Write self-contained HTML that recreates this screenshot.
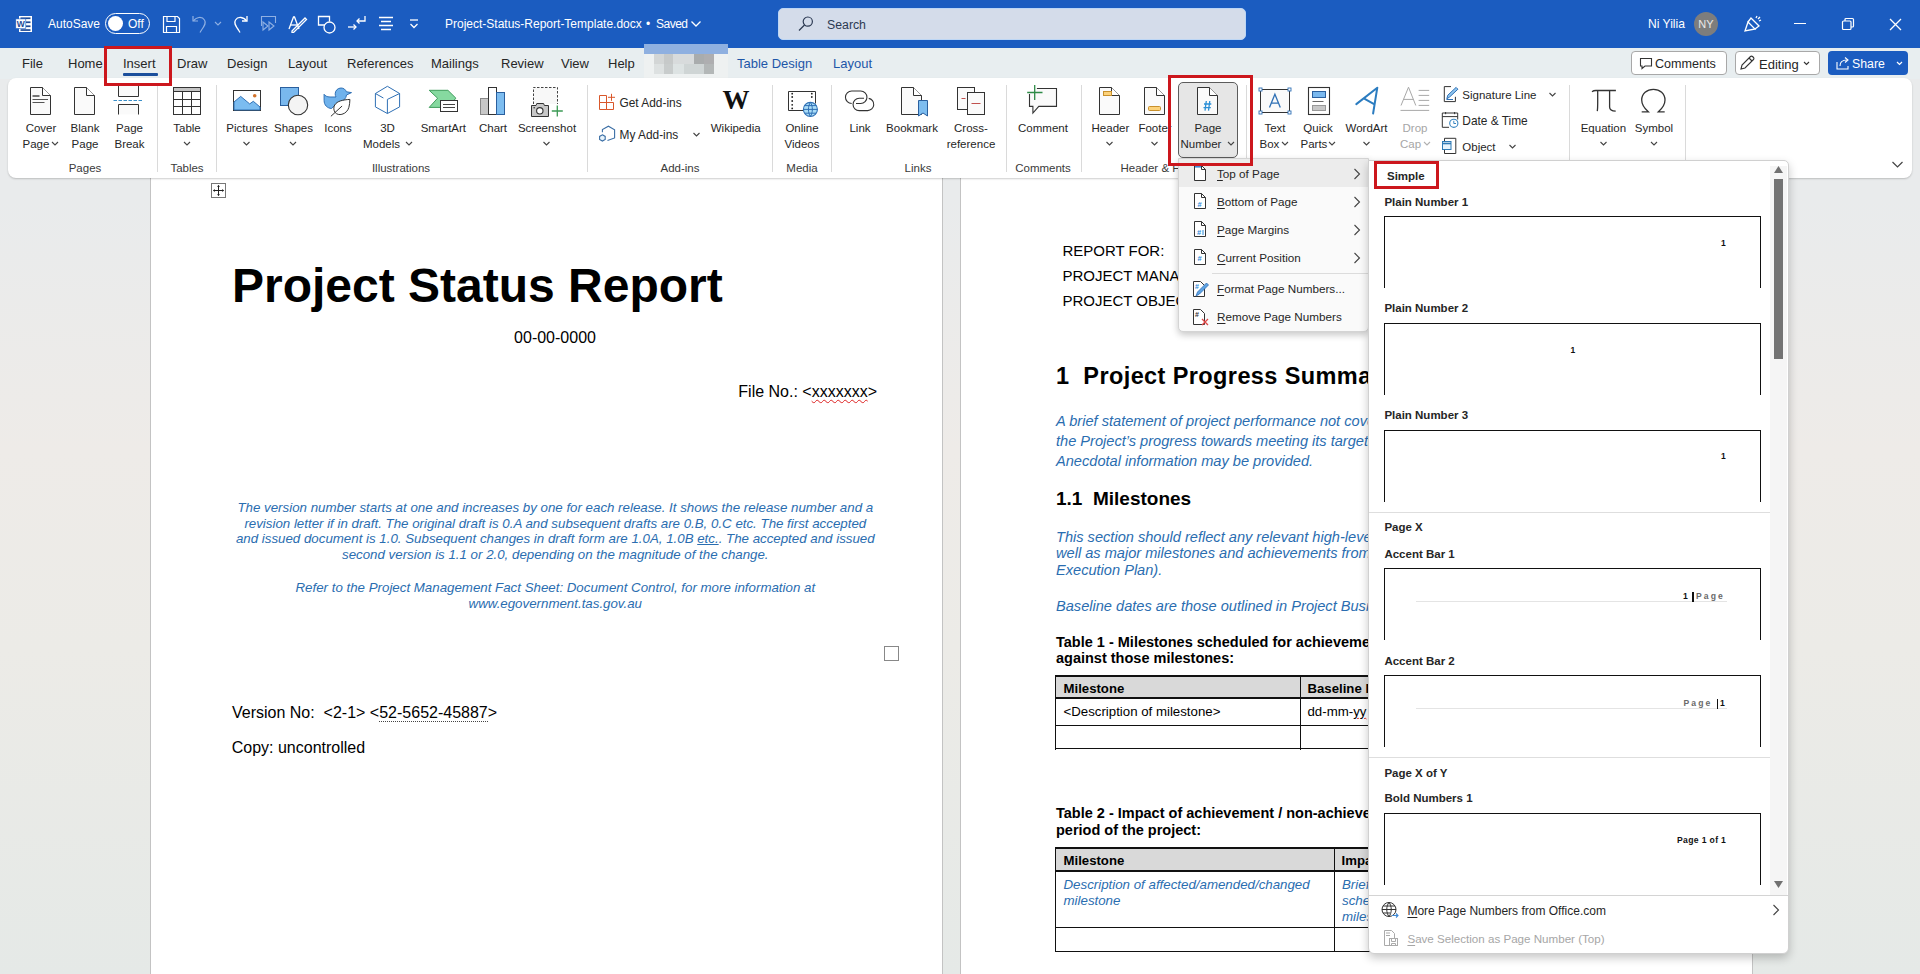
<!DOCTYPE html>
<html><head><meta charset="utf-8">
<style>
*{box-sizing:border-box;margin:0;padding:0}
html,body{width:1920px;height:974px;overflow:hidden;background:linear-gradient(180deg,#e9ebec 0,#e9ebec 200px,#eeebe8 450px,#ecebe7 650px,#e5e9e7 974px);font-family:"Liberation Sans",sans-serif;position:relative}
.a{position:absolute;white-space:nowrap}
#title{position:absolute;left:0;top:0;width:1920px;height:48px;background:#1b5cc0;color:#fff}
#tabs{position:absolute;left:0;top:48px;width:1920px;height:31px;background:#e8eef0}
.tab{position:absolute;top:8px;font-size:13px;line-height:15px;color:#262626;white-space:nowrap}
.rib{position:absolute;left:8px;top:78px;width:1904px;height:100px;background:#fff;border-radius:8px;box-shadow:0 1px 2px rgba(0,0,0,.2)}
.t{position:absolute;font-size:11.5px;line-height:16px;color:#262626;text-align:center;white-space:nowrap}
.g{position:absolute;top:160px;font-size:11.5px;line-height:16px;color:#3a3a3a;white-space:nowrap}
.sep{position:absolute;top:85px;width:1px;height:87px;background:#dadada}
.chev{position:absolute;width:7px;height:5px}
.page{position:absolute;background:#fff;border:1px solid #c3c3c3}
.d{position:absolute;white-space:nowrap;color:#000;font-family:"Liberation Sans",sans-serif}
.bl{color:#2e74b5;font-style:italic}
.mi{position:absolute;left:1217px;font-size:11.7px;line-height:15px;color:#262626;white-space:nowrap}
.gh{position:absolute;left:1384px;font-size:11.5px;line-height:15px;font-weight:bold;color:#262626;white-space:nowrap}
.pv{position:absolute;left:1384px;width:377px;height:72px;border:1.5px solid #111;border-bottom:none;background:#fff}
</style></head>
<body>
<div class="page" style="left:150px;top:150px;width:793px;height:900px"></div>
<div class="page" style="left:960px;top:150px;width:793px;height:900px"></div>
<svg class="a" style="left:211px;top:183px" width="15" height="15" viewBox="0 0 15 15"><rect x="0.5" y="0.5" width="14" height="14" fill="#fff" stroke="#777" stroke-width="1"/><path d="M7.5 2.5v10M2.5 7.5h10" stroke="#222" stroke-width="1"/><path d="M7.5 2l-1.5 1.8h3zM7.5 13l-1.5-1.8h3zM2 7.5l1.8-1.5v3zM13 7.5l-1.8-1.5v3z" fill="#222"/></svg>
<div class="d" style="left:232.0px;top:262.2px;font-size:48px;line-height:48px;font-weight:bold">Project Status Report</div>
<div class="d" style="left:455.0px;top:330.0px;font-size:16px;line-height:16px;width:200px;text-align:center;">00-00-0000</div>
<div class="d" style="left:577.0px;top:383.5px;font-size:16px;line-height:16px;width:300px;text-align:right;">File No.: &lt;<span style="text-decoration:underline wavy #d22;text-decoration-thickness:1px;text-underline-offset:2px">xxxxxxx</span>&gt;</div>
<div class="d" style="left:155.3px;top:501.4px;font-size:13.3px;line-height:13.3px;width:800px;text-align:center;color:#2a6db0;font-style:italic">The version number starts at one and increases by one for each release. It shows the release number and a</div>
<div class="d" style="left:155.3px;top:516.9px;font-size:13.3px;line-height:13.3px;width:800px;text-align:center;color:#2a6db0;font-style:italic">revision letter if in draft. The original draft is 0.A and subsequent drafts are 0.B, 0.C etc. The first accepted</div>
<div class="d" style="left:155.3px;top:532.4px;font-size:13.3px;line-height:13.3px;width:800px;text-align:center;color:#2a6db0;font-style:italic">and issued document is 1.0. Subsequent changes in draft form are 1.0A, 1.0B <u>etc.</u>. The accepted and issued</div>
<div class="d" style="left:155.3px;top:547.9px;font-size:13.3px;line-height:13.3px;width:800px;text-align:center;color:#2a6db0;font-style:italic">second version is 1.1 or 2.0, depending on the magnitude of the change.</div>
<div class="d" style="left:155.3px;top:581.1px;font-size:13.3px;line-height:13.3px;width:800px;text-align:center;color:#2a6db0;font-style:italic">Refer to the Project Management Fact Sheet: Document Control, for more information at</div>
<div class="d" style="left:155.3px;top:596.9px;font-size:13.3px;line-height:13.3px;width:800px;text-align:center;color:#2a6db0;font-style:italic">www.egovernment.tas.gov.au</div>
<div class="a" style="left:884px;top:646px;width:15px;height:15px;border:1px solid #888;background:#fff"></div>
<div class="d" style="left:232.0px;top:705.4px;font-size:16px;line-height:16px;">Version No:&nbsp; &lt;2-1&gt; &lt;<span style="border-bottom:1px dotted #444">52-5652-45887</span>&gt;</div>
<div class="d" style="left:231.7px;top:739.8px;font-size:16px;line-height:16px;">Copy: uncontrolled</div>
<div class="d" style="left:1062.4px;top:242.8px;font-size:15px;line-height:15px;">REPORT FOR:</div>
<div class="d" style="left:1062.4px;top:267.8px;font-size:15px;line-height:15px;">PROJECT MANAGER:</div>
<div class="d" style="left:1062.4px;top:292.8px;font-size:15px;line-height:15px;">PROJECT OBJECTIVE:</div>
<div class="d" style="left:1056.0px;top:365.1px;font-size:23.5px;line-height:23.5px;font-weight:bold;letter-spacing:0.4px">1&nbsp;&nbsp;Project Progress Summary</div>
<div class="d" style="left:1056.0px;top:413.9px;font-size:14.6px;line-height:14.6px;color:#2a6db0;font-style:italic">A brief statement of project performance not covered elsewhere in this report, summarising</div>
<div class="d" style="left:1056.0px;top:433.9px;font-size:14.6px;line-height:14.6px;color:#2a6db0;font-style:italic">the Project’s progress towards meeting its targets and deliverables for the reporting period.</div>
<div class="d" style="left:1056.0px;top:453.9px;font-size:14.6px;line-height:14.6px;color:#2a6db0;font-style:italic">Anecdotal information may be provided.</div>
<div class="d" style="left:1056.0px;top:488.5px;font-size:19px;line-height:19px;font-weight:bold">1.1&nbsp;&nbsp;Milestones</div>
<div class="d" style="left:1056.0px;top:529.5px;font-size:14.6px;line-height:14.6px;color:#2a6db0;font-style:italic">This section should reflect any relevant high-level milestones for the reporting period, as</div>
<div class="d" style="left:1056.0px;top:546.0px;font-size:14.6px;line-height:14.6px;color:#2a6db0;font-style:italic">well as major milestones and achievements from the Project Business Plan (or Project</div>
<div class="d" style="left:1056.0px;top:562.5px;font-size:14.6px;line-height:14.6px;color:#2a6db0;font-style:italic">Execution Plan).</div>
<div class="d" style="left:1056.0px;top:598.9px;font-size:14.6px;line-height:14.6px;color:#2a6db0;font-style:italic">Baseline dates are those outlined in Project Business Plan.</div>
<div class="d" style="left:1056.0px;top:634.7px;font-size:14.5px;line-height:14.5px;font-weight:bold">Table 1 - Milestones scheduled for achievement during the reporting period and progress</div>
<div class="d" style="left:1056.0px;top:650.7px;font-size:14.5px;line-height:14.5px;font-weight:bold">against those milestones:</div>
<div class="a" style="left:1055px;top:675px;width:700px;height:24px;background:#d9d9d9;border-top:2px solid #111;border-bottom:2px solid #111"></div>
<div class="a" style="left:1055px;top:699px;width:700px;height:50px;border-bottom:1px solid #111"></div>
<div class="a" style="left:1055px;top:725px;width:700px;height:1px;background:#111"></div>
<div class="a" style="left:1055px;top:675px;width:1px;height:75px;background:#111"></div>
<div class="a" style="left:1299.5px;top:675px;width:1px;height:75px;background:#111"></div>
<div class="d" style="left:1063.5px;top:681.6px;font-size:13.2px;line-height:13.2px;font-weight:bold">Milestone</div>
<div class="d" style="left:1307.5px;top:681.6px;font-size:13.2px;line-height:13.2px;font-weight:bold">Baseline Date</div>
<div class="d" style="left:1063.5px;top:705.3px;font-size:13.25px;line-height:13.25px;">&lt;Description of milestone&gt;</div>
<div class="d" style="left:1307.5px;top:705.3px;font-size:13.25px;line-height:13.25px;">dd-mm-<span style="text-decoration:underline wavy #d22;text-decoration-thickness:1px">yy</span></div>
<div class="d" style="left:1056.0px;top:805.7px;font-size:14.5px;line-height:14.5px;font-weight:bold">Table 2 - Impact of achievement / non-achievement of milestones on the remaining</div>
<div class="d" style="left:1056.0px;top:822.7px;font-size:14.5px;line-height:14.5px;font-weight:bold">period of the project:</div>
<div class="a" style="left:1055px;top:847px;width:700px;height:25px;background:#d9d9d9;border-top:2px solid #111;border-bottom:2px solid #111"></div>
<div class="a" style="left:1055px;top:927px;width:700px;height:1px;background:#111"></div>
<div class="a" style="left:1055px;top:951px;width:700px;height:1px;background:#111"></div>
<div class="a" style="left:1055px;top:847px;width:1px;height:105px;background:#111"></div>
<div class="a" style="left:1333.5px;top:847px;width:1px;height:105px;background:#111"></div>
<div class="d" style="left:1063.5px;top:854.2px;font-size:13.2px;line-height:13.2px;font-weight:bold">Milestone</div>
<div class="d" style="left:1341.5px;top:854.2px;font-size:13.2px;line-height:13.2px;font-weight:bold">Impact</div>
<div class="d" style="left:1063.5px;top:877.7px;font-size:13.3px;line-height:13.3px;color:#2a6db0;font-style:italic">Description of affected/amended/changed</div>
<div class="d" style="left:1063.5px;top:893.5px;font-size:13.3px;line-height:13.3px;color:#2a6db0;font-style:italic">milestone</div>
<div class="d" style="left:1342.0px;top:877.7px;font-size:13.3px;line-height:13.3px;color:#2a6db0;font-style:italic">Brief description of</div>
<div class="d" style="left:1342.0px;top:893.7px;font-size:13.3px;line-height:13.3px;color:#2a6db0;font-style:italic">schedule impact on</div>
<div class="d" style="left:1342.0px;top:909.7px;font-size:13.3px;line-height:13.3px;color:#2a6db0;font-style:italic">milestones</div>
<div id="title">
<svg class="a" style="left:15px;top:15px" width="18" height="18" viewBox="0 0 18 18"><rect x="4" y="1" width="13" height="16" fill="#fff"/><rect x="5.5" y="2.4" width="10" height="1.7" fill="#1d4a96"/><rect x="11" y="6.4" width="4.5" height="1.7" fill="#1d4a96"/><rect x="11" y="10.4" width="4.5" height="1.7" fill="#1d4a96"/><rect x="5.5" y="14.2" width="10" height="1.7" fill="#1d4a96"/><rect x="0.8" y="3.9" width="10" height="9.6" fill="#fff" stroke="#1b5cc0" stroke-width="0.6"/><text x="5.8" y="12.2" font-size="8.5" font-weight="bold" text-anchor="middle" fill="#1d4a96" font-family="Liberation Sans">W</text></svg>
<div class="a" style="left:48px;top:17px;font-size:12px;line-height:15px;color:#fff">AutoSave</div>
<div class="a" style="left:105px;top:13px;width:45px;height:21px;border:1.5px solid #fff;border-radius:11px"></div>
<div class="a" style="left:108px;top:16px;width:15px;height:15px;border-radius:50%;background:#fff"></div>
<div class="a" style="left:128px;top:17px;font-size:12px;line-height:15px;color:#fff">Off</div>
<svg class="a" style="left:162px;top:15px" width="19" height="19" viewBox="0 0 19 19" fill="none" stroke="#fff" stroke-width="1.2"><path d="M1.5 1.5h14l2 2v14h-16z"/><path d="M5 1.5v5h8v-5"/><path d="M4.5 17.5v-6h10v6"/></svg>
<svg class="a" style="left:190px;top:14px" width="20" height="20" viewBox="0 0 20 20" fill="none" stroke="#8fb0e3" stroke-width="1.2"><path d="M3 2v5h5"/><path d="M3.5 7C6 3 12 2 14.5 6c2 3 0 6-3 10l-1.5 2.5"/></svg>
<svg class="a" style="left:213px;top:20px" width="10" height="8" viewBox="0 0 10 8" fill="none" stroke="#8fb0e3" stroke-width="1.1"><path d="M2 2l3 3 3-3"/></svg>
<svg class="a" style="left:230px;top:14px" width="20" height="20" viewBox="0 0 20 20" fill="none" stroke="#fff" stroke-width="1.3"><path d="M17 2v5h-5"/><path d="M16.5 7C14 3 8 2 5.5 6c-2 3 0 6 3 10l1.5 2.5"/></svg>
<svg class="a" style="left:259px;top:15px" width="20" height="18" viewBox="0 0 20 18" fill="none" stroke="#8fb0e3" stroke-width="1.1"><path d="M2.5 11V1.5h14V8"/><path d="M4 7l5 4-5 4z"/><path d="M10 7l5 4-5 4z"/></svg>
<svg class="a" style="left:288px;top:15px" width="20" height="18" viewBox="0 0 20 18" fill="none" stroke="#fff" stroke-width="1.3"><path d="M1 14L5.5 2h1L11 14"/><path d="M3 10h6"/><path d="M4 16l13-13 1.5 1.5-13 13H4z"/></svg>
<svg class="a" style="left:317px;top:15px" width="20" height="19" viewBox="0 0 20 19" fill="none" stroke="#fff" stroke-width="1.3"><path d="M8 10H1.5V1.5h11v5"/><circle cx="12.5" cy="12.5" r="5.5"/></svg>
<svg class="a" style="left:347px;top:15px" width="20" height="18" viewBox="0 0 20 18" fill="none" stroke="#fff" stroke-width="1.3"><path d="M18 1v5h-8"/><path d="M12.5 3.5L10 6l2.5 2.5"/><path d="M1 12h8"/><path d="M6.5 9.5L9 12l-2.5 2.5"/></svg>
<svg class="a" style="left:377px;top:16px" width="18" height="16" viewBox="0 0 18 16" fill="none" stroke="#fff" stroke-width="1.3"><path d="M2 1.5h14M4 5.5h10M2 9.5h14M4 13.5h10"/></svg>
<svg class="a" style="left:407px;top:18px" width="14" height="12" viewBox="0 0 14 12" fill="none" stroke="#fff" stroke-width="1.3"><path d="M3 2h8"/><path d="M3.5 6l3.5 3.5L10.5 6"/></svg>
<div class="a" style="left:445px;top:17px;font-size:12px;line-height:15px;color:#fff">Project-Status-Report-Template.docx</div><div class="a" style="left:646px;top:17px;font-size:12px;line-height:15px;color:#fff">&#8226;</div><div class="a" style="left:656px;top:17px;font-size:12px;line-height:15px;color:#fff;letter-spacing:-0.5px">Saved</div>
<svg class="a" style="left:690px;top:19px" width="12" height="10" viewBox="0 0 12 10" fill="none" stroke="#fff" stroke-width="1.3"><path d="M1.5 2.5l4.5 4.5 4.5-4.5"/></svg>
<div class="a" style="left:778px;top:8px;width:468px;height:32px;background:#d4dcea;border:1px solid #bcd6f5;border-radius:5px"></div>
<svg class="a" style="left:797px;top:15px" width="18" height="18" viewBox="0 0 18 18" fill="none" stroke="#2c3a52" stroke-width="1.2"><circle cx="10.8" cy="6.6" r="4.6"/><path d="M7.5 10l-5.5 5.5"/></svg>
<div class="a" style="left:827px;top:18px;font-size:12.3px;line-height:15px;color:#2c3a52">Search</div>
<div class="a" style="left:1648px;top:17px;font-size:12.1px;line-height:15px;color:#fff">Ni Yilia</div>
<div class="a" style="left:1694px;top:12px;width:24px;height:24px;border-radius:50%;background:#7d7d7d;color:#e8e8e8;font-size:11px;text-align:center;line-height:24px">NY</div>
<svg class="a" style="left:1743px;top:14px" width="20" height="20" viewBox="0 0 20 20" fill="none" stroke="#fff" stroke-width="1.3"><path d="M2 17l3-9 7 7z"/><path d="M5 8l3-4 8 8-4 3"/><path d="M13 4l1-2M16 7l2-1M15 5l2-2"/></svg>
<div class="a" style="left:1794px;top:23px;width:12px;height:1.3px;background:#fff"></div>
<svg class="a" style="left:1841px;top:17px" width="14" height="14" viewBox="0 0 14 14" fill="none" stroke="#fff" stroke-width="1.2"><rect x="1.5" y="4" width="8.5" height="8.5" rx="1"/><path d="M4 4V2.5a1 1 0 0 1 1-1h6.5a1 1 0 0 1 1 1V9a1 1 0 0 1-1 1H10"/></svg>
<svg class="a" style="left:1889px;top:18px" width="13" height="13" viewBox="0 0 13 13" fill="none" stroke="#fff" stroke-width="1.3"><path d="M1 1l11 11M12 1L1 12"/></svg>
</div>
<div id="tabs">
<div class="tab" style="left:22px">File</div>
<div class="tab" style="left:68px">Home</div>
<div class="tab" style="left:123px">Insert</div>
<div class="a" style="left:123px;top:25px;width:35px;height:2.5px;background:#1b4f9c;border-radius:1px"></div>
<div class="tab" style="left:177px">Draw</div>
<div class="tab" style="left:227px">Design</div>
<div class="tab" style="left:288px">Layout</div>
<div class="tab" style="left:347px">References</div>
<div class="tab" style="left:431px">Mailings</div>
<div class="tab" style="left:501px">Review</div>
<div class="tab" style="left:561px">View</div>
<div class="tab" style="left:608px">Help</div>
<div class="tab" style="left:737px;color:#1d56a8">Table Design</div>
<div class="tab" style="left:833px;color:#1d56a8">Layout</div>
<div class="a" style="left:1631px;top:3px;width:96px;height:24px;border:1px solid #a8a8a8;border-radius:4px;background:#fff"></div>
<svg class="a" style="left:1639px;top:9px" width="14" height="13" viewBox="0 0 14 13" fill="none" stroke="#333" stroke-width="1.1"><path d="M1.5 1.5h11v7.5H6L3 11.5V9H1.5z"/></svg>
<div class="tab" style="left:1655px;top:9px;font-size:12.6px">Comments</div>
<div class="a" style="left:1735px;top:3px;width:85px;height:24px;border:1px solid #a8a8a8;border-radius:4px;background:#fff"></div>
<svg class="a" style="left:1739px;top:7px" width="16" height="16" viewBox="0 0 16 16" fill="none" stroke="#333" stroke-width="1.1"><path d="M2 14l1-4 8.5-8.5a1.4 1.4 0 0 1 2 0l1 1a1.4 1.4 0 0 1 0 2L6 13z"/><path d="M10 3l3 3"/></svg>
<div class="tab" style="left:1759px;top:9px">Editing</div>
<svg class="chev" style="left:1803px;top:13px" viewBox="0 0 7 5" fill="none" stroke="#333" stroke-width="1.1"><path d="M1 1l2.5 2.5L6 1"/></svg>
<div class="a" style="left:1828px;top:3px;width:80px;height:24px;border-radius:4px;background:#1b5cc0"></div>
<svg class="a" style="left:1835px;top:7px" width="16" height="16" viewBox="0 0 16 16" fill="none" stroke="#fff" stroke-width="1.1"><path d="M2 7v7h11v-3"/><path d="M5 11c0-4 3-6 7-6"/><path d="M10 2.5l3 2.5-3 2.5"/></svg>
<div class="tab" style="left:1852px;top:9px;color:#fff;font-size:12.3px">Share</div>
<svg class="chev" style="left:1896px;top:13px" viewBox="0 0 7 5" fill="none" stroke="#fff" stroke-width="1.2"><path d="M1 1l2.5 2.5L6 1"/></svg>
</div>
<div class="a" style="left:644px;top:44px;width:84px;height:10px;background:#8fb0e0"></div>
<div class="a" style="left:644px;top:54px;width:84px;height:30px;background:#eef1f1"></div>
<div class="a" style="left:654px;top:54px;width:10px;height:10px;background:#d3d6d6"></div>
<div class="a" style="left:664px;top:54px;width:9px;height:10px;background:#c6c9c9"></div>
<div class="a" style="left:673px;top:54px;width:21px;height:10px;background:#d8dbdc"></div>
<div class="a" style="left:694px;top:54px;width:10px;height:10px;background:#a9acad"></div>
<div class="a" style="left:704px;top:54px;width:10px;height:10px;background:#aeaeb0"></div>
<div class="a" style="left:654px;top:64px;width:10px;height:10px;background:#dde1e1"></div>
<div class="a" style="left:664px;top:64px;width:9px;height:10px;background:#c8cccc"></div>
<div class="a" style="left:673px;top:64px;width:11px;height:10px;background:#dde3e3"></div>
<div class="a" style="left:684px;top:64px;width:20px;height:10px;background:#cfd5d5"></div>
<div class="a" style="left:704px;top:64px;width:10px;height:10px;background:#b3b7b7"></div>

<div class="rib"></div>
<svg class="a" style="left:0;top:0" width="1920" height="180" viewBox="0 0 1920 180"><path d="M30.5 87.5H42.5L50.5 95.5V114.5H30.5Z" fill="#fafafa" stroke="#333" stroke-width="1"/><path d="M42.5 87.5V95.5H50.5" fill="#fff" stroke="#333" stroke-width="1"/><path d="M32.5 96h7" stroke="#666" stroke-width="1.8"/><path d="M32.5 99.5h15.5M32.5 102.5h12" stroke="#555" stroke-width="1"/><path d="M74.5 87.5H86.5L94.5 95.5V114.5H74.5Z" fill="#fafafa" stroke="#333" stroke-width="1"/><path d="M86.5 87.5V95.5H94.5" fill="#fff" stroke="#333" stroke-width="1"/><path d="M118.5 86v10.5h20V86" fill="#fafafa" stroke="#333" stroke-width="1"/><path d="M113.5 100.5h30" stroke="#3a8fc8" stroke-width="1" stroke-dasharray="3.5 1.5"/><path d="M118.5 114.5V104.5h20V114.5" fill="#fafafa" stroke="#333" stroke-width="1"/><rect x="173.5" y="87.5" width="27" height="27" fill="#fff" stroke="#333" stroke-width="1"/><rect x="174" y="88" width="26" height="3" fill="#c4c4c4"/><path d="M173.5 91.5h27M173.5 99.5h27M173.5 106.5h27M182.5 91.5v23M191.5 91.5v23" stroke="#333" stroke-width="1"/><rect x="233.5" y="90.5" width="27" height="20" fill="#fff" stroke="#333" stroke-width="1"/><path d="M234 102l6.7-5.6 9 7.5 3.6-2.6 6.7 5.7V110H234z" fill="#7bbcf0" stroke="#2f70b5" stroke-width="1"/><circle cx="254.7" cy="95.7" r="1.8" fill="#d2722a"/><rect x="280.5" y="87.5" width="18" height="18" fill="#79b8ee" stroke="#2a5f9e" stroke-width="1"/><circle cx="298" cy="105" r="9.7" fill="#f4f4f4" stroke="#333" stroke-width="1.1"/><path d="M324.1 94.3C325 95.8 327 97 330 97h6c-.6-1-.8-2-.8-3.2 0-3.2 2.6-5.8 5.8-5.8 2.6 0 4.6 1.6 5.4 3.8l5.1.8-5 2.4c-.4 3.3-2.8 6-6 6.8L336 104l-4.4 4.5c-4.3-.3-7.5-3.2-7.5-8.2z" fill="#6fb2ec" stroke="#2f70b5" stroke-width="1"/><path d="M349.9 99.4c-7 .4-12.7 1.6-15.2 5.6-1.3 2.3-1.2 5.5.6 7.7 1.6 1.8 4.2 2.2 6.6 1.6 3.5-.9 6-3.5 7-7 .7-2.6.9-5.2 1-7.9z" fill="#fff" stroke="#333" stroke-width="1"/><path d="M330.9 116.3l11.2-10.3" stroke="#333" stroke-width="1"/><path d="M387.4 86.3l12.2 7.2v13.4l-12.2 6.6-12-6.6V93.5z" fill="#fff" stroke="#2f70b5" stroke-width="1"/><path d="M399.6 93.5l-12.2 5.9v14.1M375.4 93.5l8 4.5" fill="none" stroke="#2f70b5" stroke-width="1"/><path d="M429.2 90.3h18.7l8 7.9-8 9.2h-18.7l8.4-9.2z" fill="#86d9a0" stroke="#3f9d5c" stroke-width="1"/><rect x="440.5" y="100.5" width="17" height="11" fill="#fff" stroke="#333" stroke-width="1"/><path d="M443 104.5h12M443 107.5h12" stroke="#444" stroke-width="1"/><rect x="480.5" y="98.5" width="8" height="16" fill="#c8c8c8" stroke="#888" stroke-width="1"/><rect x="488.5" y="87.5" width="8" height="27" fill="#fff" stroke="#333" stroke-width="1"/><rect x="496.5" y="92.5" width="8" height="22" fill="#7dbdf0" stroke="#2a5f9e" stroke-width="1"/><path d="M533.5 104V87.5h24V104" fill="#f8f8f8" stroke="#444" stroke-width="1" stroke-dasharray="2.5 1.5"/><path d="M531.5 105.5h4.5l.8-2h6.8l.8 2h4.1v11h-17z" fill="#c8c8c8" stroke="#333" stroke-width="1"/><circle cx="539.8" cy="110.8" r="3.2" fill="#fff" stroke="#333" stroke-width="1.1"/><circle cx="534.2" cy="107.8" r=".8" fill="#333"/><path d="M557.3 105.4v11M551.8 111h11" stroke="#3d9a55" stroke-width="1.3"/><path d="M599.5 95.5h7v7h-7zM599.5 102.5h7v7h-7zM606.5 102.5h7v7h-7z" fill="none" stroke="#d9572a" stroke-width="1"/><path d="M611.5 93.8v7M608 97.3h7" stroke="#d9572a" stroke-width="1"/><path d="M602.4 132.2v-2.7l6-3.3 6.2 3.5v8.2l-7.1 2.5" fill="none" stroke="#3a6ea5" stroke-width="1.1"/><path d="M602.4 134.8l2.8 1.6v3.1l-2.8 1.6-2.8-1.6v-3.1z" fill="#e8f4fc" stroke="#3a6ea5" stroke-width="1.1"/><path d="M803 110.5h-14.5v-19h27v12" fill="#fff" stroke="#333" stroke-width="1"/><circle cx="792.2" cy="93.7" r=".9" fill="#222"/><circle cx="792.2" cy="97" r=".9" fill="#222"/><circle cx="792.2" cy="101" r=".9" fill="#222"/><circle cx="792.2" cy="104.8" r=".9" fill="#222"/><circle cx="792.2" cy="108.4" r=".9" fill="#222"/><circle cx="811.8" cy="93.7" r=".9" fill="#222"/><circle cx="811.8" cy="97" r=".9" fill="#222"/><circle cx="810.4" cy="109.4" r="7" fill="#a9dcf7" stroke="#2f70b5" stroke-width="1.1"/><path d="M803.4 109.4h14M810.4 102.4c-2.6 3.5-2.6 10.5 0 14M810.4 102.4c2.6 3.5 2.6 10.5 0 14M804.5 105.6h11.8M804.5 113.2h11.8" fill="none" stroke="#2f70b5" stroke-width="1"/><path d="M851.7 103.5a6.2 6.2 0 0 1 0-12.5h9a6.25 6.25 0 0 1 0 12.5H856" fill="none" stroke="#333" stroke-width="1.1"/><path d="M864 98.3h-4.8a6.15 6.15 0 0 0 0 12.3h8.5a6.15 6.15 0 0 0 1-12.2" fill="none" stroke="#333" stroke-width="1.1"/><path d="M901.5 87.5H913.5L921.5 95.5V114.5H901.5Z" fill="#fafafa" stroke="#333" stroke-width="1"/><path d="M913.5 87.5V95.5H921.5" fill="#fff" stroke="#333" stroke-width="1"/><path d="M918.5 100.5h9v15.5l-4.5-3-4.5 3z" fill="#7dbdf0" stroke="#2a5f9e" stroke-width="1"/><rect x="957.5" y="87.5" width="17" height="22" fill="#fafafa" stroke="#333" stroke-width="1"/><rect x="967.5" y="92.5" width="17" height="22" fill="#fafafa" stroke="#333" stroke-width="1"/><path d="M961.5 98.5h4M971.5 103.5h9" stroke="#c0504d" stroke-width="1.1"/><path d="M1036.9 88.5h19.6v17.9h-17.7l-5.9 6.6v-6.6h-3.4V94" fill="#fafafa" stroke="#333" stroke-width="1.1"/><path d="M1034.7 84.9v15M1027.2 92.5h15.3" stroke="#2e8b47" stroke-width="1.3"/><path d="M1099.5 87.5H1111.5L1119.5 95.5V114.5H1099.5Z" fill="#fafafa" stroke="#333" stroke-width="1"/><path d="M1111.5 87.5V95.5H1119.5" fill="#fff" stroke="#333" stroke-width="1"/><rect x="1103.5" y="91.5" width="8" height="4" fill="#fcd27a" stroke="#c8902c" stroke-width="1"/><path d="M1144.5 87.5H1156.5L1164.5 95.5V114.5H1144.5Z" fill="#fafafa" stroke="#333" stroke-width="1"/><path d="M1156.5 87.5V95.5H1164.5" fill="#fff" stroke="#333" stroke-width="1"/><rect x="1148.5" y="106.5" width="12" height="4" rx="1" fill="#fcd27a" stroke="#c8902c" stroke-width="1"/><rect x="1260.5" y="89.5" width="29" height="23" fill="#fafafa" stroke="#333" stroke-width="1"/><rect x="1259.0" y="88.0" width="3" height="3" fill="#fff" stroke="#2f70b5" stroke-width="0.9"/><rect x="1288.0" y="88.0" width="3" height="3" fill="#fff" stroke="#2f70b5" stroke-width="0.9"/><rect x="1259.0" y="111.0" width="3" height="3" fill="#fff" stroke="#2f70b5" stroke-width="0.9"/><rect x="1288.0" y="111.0" width="3" height="3" fill="#fff" stroke="#2f70b5" stroke-width="0.9"/><path d="M1269.5 107.4l5.4-13.2 5.4 13.2M1271.3 103.2h7.2" fill="none" stroke="#2f70b5" stroke-width="1.3"/><rect x="1308.5" y="87.5" width="21" height="27" fill="#fff" stroke="#333" stroke-width="1.1"/><rect x="1312.5" y="91.5" width="13" height="6" fill="#7ab8ee" stroke="#2a5f9e" stroke-width="1"/><path d="M1312.5 101.5h11" stroke="#666" stroke-width="1"/><rect x="1312.5" y="105.5" width="13" height="5" fill="#c8c8c8" stroke="#999" stroke-width="1"/><path d="M1356.3 104.1L1377.3 87.7 1373.1 113.5M1364.7 98.9l9.8 5.4" fill="none" stroke="#2b7cc0" stroke-width="2" stroke-linecap="round" stroke-linejoin="round"/><path d="M1401 105.5l7.5-18.3 7.3 18.3M1403.5 99.4h10M1418.6 90.4h10.6M1418.6 95.4h10.6M1418.6 100.4h10.6M1418.6 105.4h10.6M1400.5 110.4h28.7" fill="none" stroke="#a8a8a8" stroke-width="1"/><path d="M1451 86.6h-6.7v15h11.1v-4.8" fill="none" stroke="#333" stroke-width="1"/><path d="M1446.8 98.8l1-3.6 8.3-7.8 1.8 1.8-8.3 7.8z" fill="#8fc6f0" stroke="#2f70b5" stroke-width="1"/><path d="M1446.5 99.5h6.5" stroke="#2f70b5" stroke-width="1"/><path d="M1449 127.3h-6.7V113h15.4v6.5M1442.3 116.6h15.4M1445.6 112v2.2M1454.6 112v2.2" fill="none" stroke="#333" stroke-width="1"/><circle cx="1453.8" cy="123.3" r="4.1" fill="#fff" stroke="#3a86c0" stroke-width="1.1"/><path d="M1453.8 120.8v2.7h2.2" fill="none" stroke="#3a86c0" stroke-width="1"/><path d="M1444.5 149.5v4h11.3v-15.2h-11.3v3" fill="none" stroke="#333" stroke-width="1"/><rect x="1442.5" y="141.5" width="8.5" height="8" fill="#e8f4fc" stroke="#2f7ab5" stroke-width="1"/><path d="M1442.5 143.5h8.5" stroke="#2f7ab5" stroke-width="1.6"/><path d="M1592 91.7c1.2-.9 2.4-1.2 3.8-1.2h20.1M1597.7 90.5v13c0 3-.1 5.5-.4 7.6M1609.6 90.5v16.5c0 2.8 2 4.1 6.1 4.1" fill="none" stroke="#333" stroke-width="1.3"/><path d="M1641.7 111.8h6.6c-4.5-4-6.6-7.8-6.6-11.8 0-6.3 5.2-10.7 11.7-10.7s11.6 4.4 11.6 10.7c0 4-2.1 7.8-6.6 11.8h6.3" fill="none" stroke="#333" stroke-width="1.3"/><path d="M52.0 142.0l3 3 3-3" fill="none" stroke="#444" stroke-width="1.1"/><path d="M184.0 142.0l3 3 3-3" fill="none" stroke="#444" stroke-width="1.1"/><path d="M243.5 142.0l3 3 3-3" fill="none" stroke="#444" stroke-width="1.1"/><path d="M290.0 142.0l3 3 3-3" fill="none" stroke="#444" stroke-width="1.1"/><path d="M406.0 142.0l3 3 3-3" fill="none" stroke="#444" stroke-width="1.1"/><path d="M543.5 142.0l3 3 3-3" fill="none" stroke="#444" stroke-width="1.1"/><path d="M693.5 133.0l3 3 3-3" fill="none" stroke="#444" stroke-width="1.1"/><path d="M1106.5 142.0l3 3 3-3" fill="none" stroke="#444" stroke-width="1.1"/><path d="M1151.5 142.0l3 3 3-3" fill="none" stroke="#444" stroke-width="1.1"/><path d="M1282.0 142.0l3 3 3-3" fill="none" stroke="#444" stroke-width="1.1"/><path d="M1329.0 142.0l3 3 3-3" fill="none" stroke="#444" stroke-width="1.1"/><path d="M1363.5 142.0l3 3 3-3" fill="none" stroke="#444" stroke-width="1.1"/><path d="M1424.0 142.0l3 3 3-3" fill="none" stroke="#b0b0b0" stroke-width="1.1"/><path d="M1549.5 93.0l3 3 3-3" fill="none" stroke="#444" stroke-width="1.1"/><path d="M1509.5 145.0l3 3 3-3" fill="none" stroke="#444" stroke-width="1.1"/><path d="M1600.5 142.0l3 3 3-3" fill="none" stroke="#444" stroke-width="1.1"/><path d="M1651.0 142.0l3 3 3-3" fill="none" stroke="#444" stroke-width="1.1"/><path d="M1892.5 162l5 5 5-5" fill="none" stroke="#444" stroke-width="1.2"/></svg>
<div class="t" style="left:-19.0px;top:120px;width:120px">Cover</div>
<div class="t" style="left:22.5px;top:136px;text-align:left;">Page</div>
<div class="t" style="left:25.0px;top:120px;width:120px">Blank<br>Page</div>
<div class="t" style="left:69.5px;top:120px;width:120px">Page<br>Break</div>
<div class="g" style="left:25.0px;width:120px;text-align:center">Pages</div>
<div class="sep" style="left:157px"></div>
<div class="t" style="left:127.0px;top:120px;width:120px">Table</div>
<div class="g" style="left:127.0px;width:120px;text-align:center">Tables</div>
<div class="sep" style="left:215.5px"></div>
<div class="t" style="left:187.0px;top:120px;width:120px">Pictures</div>
<div class="t" style="left:233.5px;top:120px;width:120px">Shapes</div>
<div class="t" style="left:278.0px;top:120px;width:120px">Icons</div>
<div class="t" style="left:327.5px;top:120px;width:120px">3D</div>
<div class="t" style="left:363px;top:136px;text-align:left;">Models</div>
<div class="t" style="left:383.4px;top:120px;width:120px">SmartArt</div>
<div class="t" style="left:433.0px;top:120px;width:120px">Chart</div>
<div class="t" style="left:487.0px;top:120px;width:120px">Screenshot</div>
<div class="g" style="left:341.0px;width:120px;text-align:center">Illustrations</div>
<div class="sep" style="left:586.5px"></div>
<div class="t" style="left:619.5px;top:95px;text-align:left;font-size:11.9px">Get Add-ins</div>
<div class="t" style="left:619.5px;top:127px;text-align:left;font-size:11.9px">My Add-ins</div>
<div class="a" style="left:719px;top:85px;width:34px;text-align:center;font-family:'Liberation Serif',serif;font-weight:bold;font-size:27px;line-height:30px;color:#111">W</div>
<div class="t" style="left:675.7px;top:120px;width:120px">Wikipedia</div>
<div class="g" style="left:620.0px;width:120px;text-align:center">Add-ins</div>
<div class="sep" style="left:772px"></div>
<div class="t" style="left:742.0px;top:120px;width:120px">Online<br>Videos</div>
<div class="g" style="left:742.0px;width:120px;text-align:center">Media</div>
<div class="sep" style="left:830.5px"></div>
<div class="t" style="left:800.0px;top:120px;width:120px">Link</div>
<div class="t" style="left:852.0px;top:120px;width:120px">Bookmark</div>
<div class="t" style="left:911.0px;top:120px;width:120px">Cross-<br>reference</div>
<div class="g" style="left:858.0px;width:120px;text-align:center">Links</div>
<div class="sep" style="left:1005.5px"></div>
<div class="t" style="left:983.0px;top:120px;width:120px">Comment</div>
<div class="g" style="left:983.0px;width:120px;text-align:center">Comments</div>
<div class="sep" style="left:1080.5px"></div>
<div class="t" style="left:1050.4px;top:120px;width:120px">Header</div>
<div class="t" style="left:1095.0px;top:120px;width:120px">Footer</div>
<div class="g" style="left:1103.0px;width:120px;text-align:center">Header &amp; Footer</div>
<div class="sep" style="left:1245.5px"></div>
<div class="a" style="left:1178px;top:82px;width:60px;height:76px;background:#e6e6e6;border:1px solid #5c5c5c;border-radius:5px"></div>
<svg class="a" style="left:0;top:0" width="1920" height="180" viewBox="0 0 1920 180"><path d="M1197.5 87.5H1209.5L1217.5 95.5V114.5H1197.5Z" fill="#fafafa" stroke="#333" stroke-width="1"/><path d="M1209.5 87.5V95.5H1217.5" fill="#fff" stroke="#333" stroke-width="1"/><path d="M1206.3 101l-1.3 9.6M1209.8 101l-1.3 9.6M1204 104h7.3M1203.5 107.6h7.3" stroke="#2b8fd6" stroke-width="1.3"/><path d="M1228 142l3 3 3-3" fill="none" stroke="#444" stroke-width="1.1"/></svg>
<div class="t" style="left:1148.0px;top:120px;width:120px">Page</div>
<div class="t" style="left:1180.5px;top:136px;text-align:left;">Number</div>
<div class="t" style="left:1215.0px;top:120px;width:120px">Text</div>
<div class="t" style="left:1259.5px;top:136px;text-align:left;">Box</div>
<div class="t" style="left:1258.0px;top:120px;width:120px">Quick</div>
<div class="t" style="left:1300.5px;top:136px;text-align:left;">Parts</div>
<div class="t" style="left:1306.5px;top:120px;width:120px">WordArt</div>
<div class="t" style="left:1355.0px;top:120px;width:120px;color:#a6a6a6">Drop</div>
<div class="t" style="left:1400px;top:136px;text-align:left;color:#a6a6a6">Cap</div>
<div class="t" style="left:1462.3px;top:87px;text-align:left;">Signature Line</div>
<div class="t" style="left:1462.3px;top:113px;text-align:left;font-size:11.9px">Date &amp; Time</div>
<div class="t" style="left:1462.3px;top:139px;text-align:left;">Object</div>
<div class="sep" style="left:1569px"></div>
<div class="t" style="left:1543.4px;top:120px;width:120px">Equation</div>
<div class="t" style="left:1594.0px;top:120px;width:120px">Symbol</div>
<div class="sep" style="left:1684.5px"></div>
<div class="a" style="left:104px;top:46px;width:68px;height:40px;border:3px solid #cc171d"></div>
<div class="a" style="left:1178px;top:158px;width:191px;height:174px;background:#fafafa;border:1px solid #d4d4d4;border-radius:0 0 5px 5px;box-shadow:0 3px 7px rgba(0,0,0,.22)"></div>
<div class="a" style="left:1179px;top:159px;width:189px;height:28px;background:#ececec"></div>
<svg class="a" style="left:1193px;top:164.1px" width="14" height="18" viewBox="0 0 14 18"><path d="M1.5 1.5h7l4 4v11h-11z" fill="#fff" stroke="#333" stroke-width="1"/><path d="M8.5 1.5v4h4" fill="none" stroke="#333" stroke-width="1"/><path d="M2 2.5h6" stroke="#3f8ad6" stroke-width="2.2"/></svg>
<div class="a" style="left:1217.0px;top:168.2px;font-size:11.7px;line-height:11.7px;color:#262626;"><u style="text-underline-offset:2px">T</u>op of Page</div>
<svg class="a" style="left:1353px;top:167.6px" width="8" height="12" viewBox="0 0 8 12" fill="none" stroke="#444" stroke-width="1.1"><path d="M1.5 1l5 5-5 5"/></svg>
<svg class="a" style="left:1193px;top:192.0px" width="14" height="18" viewBox="0 0 14 18"><path d="M1.5 1.5h7l4 4v11h-11z" fill="#fff" stroke="#333" stroke-width="1"/><path d="M8.5 1.5v4h4" fill="none" stroke="#333" stroke-width="1"/><text x="6.5" y="15" font-size="7.5" font-weight="bold" fill="#2e8ad8" text-anchor="middle" font-family="Liberation Sans">#</text></svg>
<div class="a" style="left:1217.0px;top:196.1px;font-size:11.7px;line-height:11.7px;color:#262626;"><u style="text-underline-offset:2px">B</u>ottom of Page</div>
<svg class="a" style="left:1353px;top:195.5px" width="8" height="12" viewBox="0 0 8 12" fill="none" stroke="#444" stroke-width="1.1"><path d="M1.5 1l5 5-5 5"/></svg>
<svg class="a" style="left:1193px;top:220.0px" width="14" height="18" viewBox="0 0 14 18"><path d="M1.5 1.5h7l4 4v11h-11z" fill="#fff" stroke="#333" stroke-width="1"/><path d="M8.5 1.5v4h4" fill="none" stroke="#333" stroke-width="1"/><text x="6" y="15" font-size="7.5" font-weight="bold" fill="#2e8ad8" text-anchor="middle" font-family="Liberation Sans">#</text><path d="M10 10v5" stroke="#2e8ad8" stroke-width="1"/></svg>
<div class="a" style="left:1217.0px;top:224.1px;font-size:11.7px;line-height:11.7px;color:#262626;"><u style="text-underline-offset:2px">P</u>age Margins</div>
<svg class="a" style="left:1353px;top:223.5px" width="8" height="12" viewBox="0 0 8 12" fill="none" stroke="#444" stroke-width="1.1"><path d="M1.5 1l5 5-5 5"/></svg>
<svg class="a" style="left:1193px;top:248.0px" width="14" height="18" viewBox="0 0 14 18"><path d="M1.5 1.5h7l4 4v11h-11z" fill="#fff" stroke="#333" stroke-width="1"/><path d="M8.5 1.5v4h4" fill="none" stroke="#333" stroke-width="1"/><text x="6.5" y="12.5" font-size="7.5" font-weight="bold" fill="#2e8ad8" text-anchor="middle" font-family="Liberation Sans">#</text></svg>
<div class="a" style="left:1217.0px;top:252.1px;font-size:11.7px;line-height:11.7px;color:#262626;"><u style="text-underline-offset:2px">C</u>urrent Position</div>
<svg class="a" style="left:1353px;top:251.5px" width="8" height="12" viewBox="0 0 8 12" fill="none" stroke="#444" stroke-width="1.1"><path d="M1.5 1l5 5-5 5"/></svg>
<div class="a" style="left:1212px;top:273px;width:156px;height:1px;background:#dcdcdc"></div>
<svg class="a" style="left:1192px;top:280px" width="18" height="18" viewBox="0 0 18 18"><path d="M1.5 1.5h7l4 4v11h-11z" fill="#fff" stroke="#333" stroke-width="1"/><text x="5" y="9" font-size="7" font-weight="bold" fill="#2e8ad8" text-anchor="middle" font-family="Liberation Sans">#</text><path d="M4 16l1.5-4 9-9 2 2-9 9z" fill="#5ea3e3" stroke="#2e6db5" stroke-width="0.8"/></svg>
<div class="a" style="left:1217.0px;top:282.7px;font-size:11.7px;line-height:11.7px;color:#262626;"><u style="text-underline-offset:2px">F</u>ormat Page Numbers...</div>
<svg class="a" style="left:1192px;top:308px" width="18" height="18" viewBox="0 0 18 18"><path d="M1.5 1.5h7l4 4v11h-11z" fill="#fff" stroke="#333" stroke-width="1"/><text x="5" y="9" font-size="7" font-weight="bold" fill="#333" text-anchor="middle" font-family="Liberation Sans">#</text><path d="M10 11l6 6M16 11l-6 6" stroke="#e04848" stroke-width="1.3"/></svg>
<div class="a" style="left:1217.0px;top:311.2px;font-size:11.7px;line-height:11.7px;color:#262626;"><u style="text-underline-offset:2px">R</u>emove Page Numbers</div>
<div class="a" style="left:1168px;top:75px;width:85px;height:91px;border:3px solid #cc171d"></div>
<div class="a" style="left:1368px;top:160px;width:421px;height:794px;background:#fff;border:1px solid #d0d0d0;border-radius:0 5px 6px 6px;box-shadow:0 4px 10px rgba(0,0,0,.22)"></div>
<div class="a" style="left:1770px;top:166px;width:17px;height:729px;background:#f5f5f5"></div>
<svg class="a" style="left:1773px;top:165px" width="11" height="9" viewBox="0 0 11 9"><path d="M1 8l4.5-7 4.5 7z" fill="#707070"/></svg>
<div class="a" style="left:1774px;top:179px;width:9px;height:180px;background:#737373"></div>
<svg class="a" style="left:1773px;top:880px" width="11" height="9" viewBox="0 0 11 9"><path d="M1 1l4.5 7 4.5-7z" fill="#707070"/></svg>
<div class="a" style="left:1387.0px;top:170.6px;font-size:11.5px;line-height:11.5px;color:#262626;font-weight:bold">Simple</div>
<div class="a" style="left:1374px;top:161px;width:65px;height:28px;border:3px solid #cc171d"></div>
<div class="a" style="left:1384.4px;top:196.5px;font-size:11.5px;line-height:11.5px;color:#262626;font-weight:bold">Plain Number 1</div>
<div class="a" style="left:1384px;top:216px;width:377px;height:72px;border:1.6px solid #111;border-bottom:none;background:#fff"></div>
<div class="a" style="left:1721px;top:238.8px;font-size:8.5px;line-height:8.5px;font-weight:bold;color:#111;">1</div>
<div class="a" style="left:1384.4px;top:303.0px;font-size:11.5px;line-height:11.5px;color:#262626;font-weight:bold">Plain Number 2</div>
<div class="a" style="left:1384px;top:323px;width:377px;height:72px;border:1.6px solid #111;border-bottom:none;background:#fff"></div>
<div class="a" style="left:1570.5px;top:345.6px;font-size:8.5px;line-height:8.5px;font-weight:bold;color:#111;">1</div>
<div class="a" style="left:1384.4px;top:409.8px;font-size:11.5px;line-height:11.5px;color:#262626;font-weight:bold">Plain Number 3</div>
<div class="a" style="left:1384px;top:430px;width:377px;height:72px;border:1.6px solid #111;border-bottom:none;background:#fff"></div>
<div class="a" style="left:1721px;top:452.4px;font-size:8.5px;line-height:8.5px;font-weight:bold;color:#111;">1</div>
<div class="a" style="left:1369px;top:512px;width:401px;height:1px;background:#dedede"></div>
<div class="a" style="left:1384.4px;top:522.3px;font-size:11.5px;line-height:11.5px;color:#262626;font-weight:bold">Page X</div>
<div class="a" style="left:1384.4px;top:548.5px;font-size:11.5px;line-height:11.5px;color:#262626;font-weight:bold">Accent Bar 1</div>
<div class="a" style="left:1384px;top:568px;width:377px;height:72px;border:1.6px solid #111;border-bottom:none;background:#fff"></div>
<div class="a" style="left:1416px;top:601px;width:311px;height:1px;background:#e4e4e4"></div>
<div class="a" style="left:1683px;top:591.5px;font-size:8.6px;line-height:9px;font-weight:bold;color:#111">1</div>
<div class="a" style="left:1692.2px;top:592px;width:1.4px;height:9.5px;background:#111"></div>
<div class="a" style="left:1696px;top:591.5px;font-size:8.6px;line-height:9px;font-weight:bold;color:#6a6a6a;letter-spacing:2.1px">Page</div>
<div class="a" style="left:1384.4px;top:655.8px;font-size:11.5px;line-height:11.5px;color:#262626;font-weight:bold">Accent Bar 2</div>
<div class="a" style="left:1384px;top:675px;width:377px;height:72px;border:1.6px solid #111;border-bottom:none;background:#fff"></div>
<div class="a" style="left:1416px;top:708px;width:311px;height:1px;background:#e4e4e4"></div>
<div class="a" style="left:1683.5px;top:698.5px;font-size:8.6px;line-height:9px;font-weight:bold;color:#6a6a6a;letter-spacing:2.1px">Page</div>
<div class="a" style="left:1717px;top:699px;width:1.4px;height:9.5px;background:#111"></div>
<div class="a" style="left:1720px;top:698.5px;font-size:8.6px;line-height:9px;font-weight:bold;color:#111">1</div>
<div class="a" style="left:1369px;top:757px;width:401px;height:1px;background:#dedede"></div>
<div class="a" style="left:1384.4px;top:767.6px;font-size:11.5px;line-height:11.5px;color:#262626;font-weight:bold">Page X of Y</div>
<div class="a" style="left:1384.4px;top:793.3px;font-size:11.5px;line-height:11.5px;color:#262626;font-weight:bold">Bold Numbers 1</div>
<div class="a" style="left:1384px;top:813px;width:377px;height:72px;border:1.6px solid #111;border-bottom:none;background:#fff"></div>
<div class="a" style="left:1677px;top:835.7px;font-size:8.6px;line-height:8.6px;font-weight:bold;color:#111;letter-spacing:0.35px">Page 1 of 1</div>
<div class="a" style="left:1369px;top:895px;width:419px;height:1px;background:#d4d4d4"></div>
<svg class="a" style="left:1381px;top:901px" width="18" height="18" viewBox="0 0 18 18" fill="none" stroke="#333" stroke-width="1"><circle cx="8" cy="8.5" r="7"/><path d="M1 8.5h14M8 1.5c-3 3.5-3 10.5 0 14M8 1.5c3 3.5 3 10.5 0 14M2 5h12M2 12h7"/><path d="M11 14.5h6M15 12.5l2 2-2 2" stroke="#3f8ad6" stroke-width="1.1"/></svg>
<div class="a" style="left:1407.4px;top:904.8px;font-size:12px;line-height:12px;color:#262626;"><u style="text-underline-offset:2px">M</u>ore Page Numbers from Office.com</div>
<svg class="a" style="left:1772px;top:904px" width="8" height="12" viewBox="0 0 8 12" fill="none" stroke="#444" stroke-width="1.1"><path d="M1.5 1l5 5-5 5"/></svg>
<svg class="a" style="left:1383px;top:929px" width="16" height="18" viewBox="0 0 16 18" fill="none" stroke="#aaa" stroke-width="1"><path d="M1.5 1.5h7l3 3v12h-10z"/><path d="M3 4h4M3 6.5h4"/><rect x="6.5" y="9.5" width="8" height="7" fill="#fff"/><path d="M8.5 9.5v3h4v-3M8.5 16.5v-2h4v2"/></svg>
<div class="a" style="left:1407.4px;top:933.2px;font-size:11.6px;line-height:11.6px;color:#262626;color:#a6a6a6"><u style="text-underline-offset:2px">S</u>ave Selection as Page Number (Top)</div>
</body></html>
